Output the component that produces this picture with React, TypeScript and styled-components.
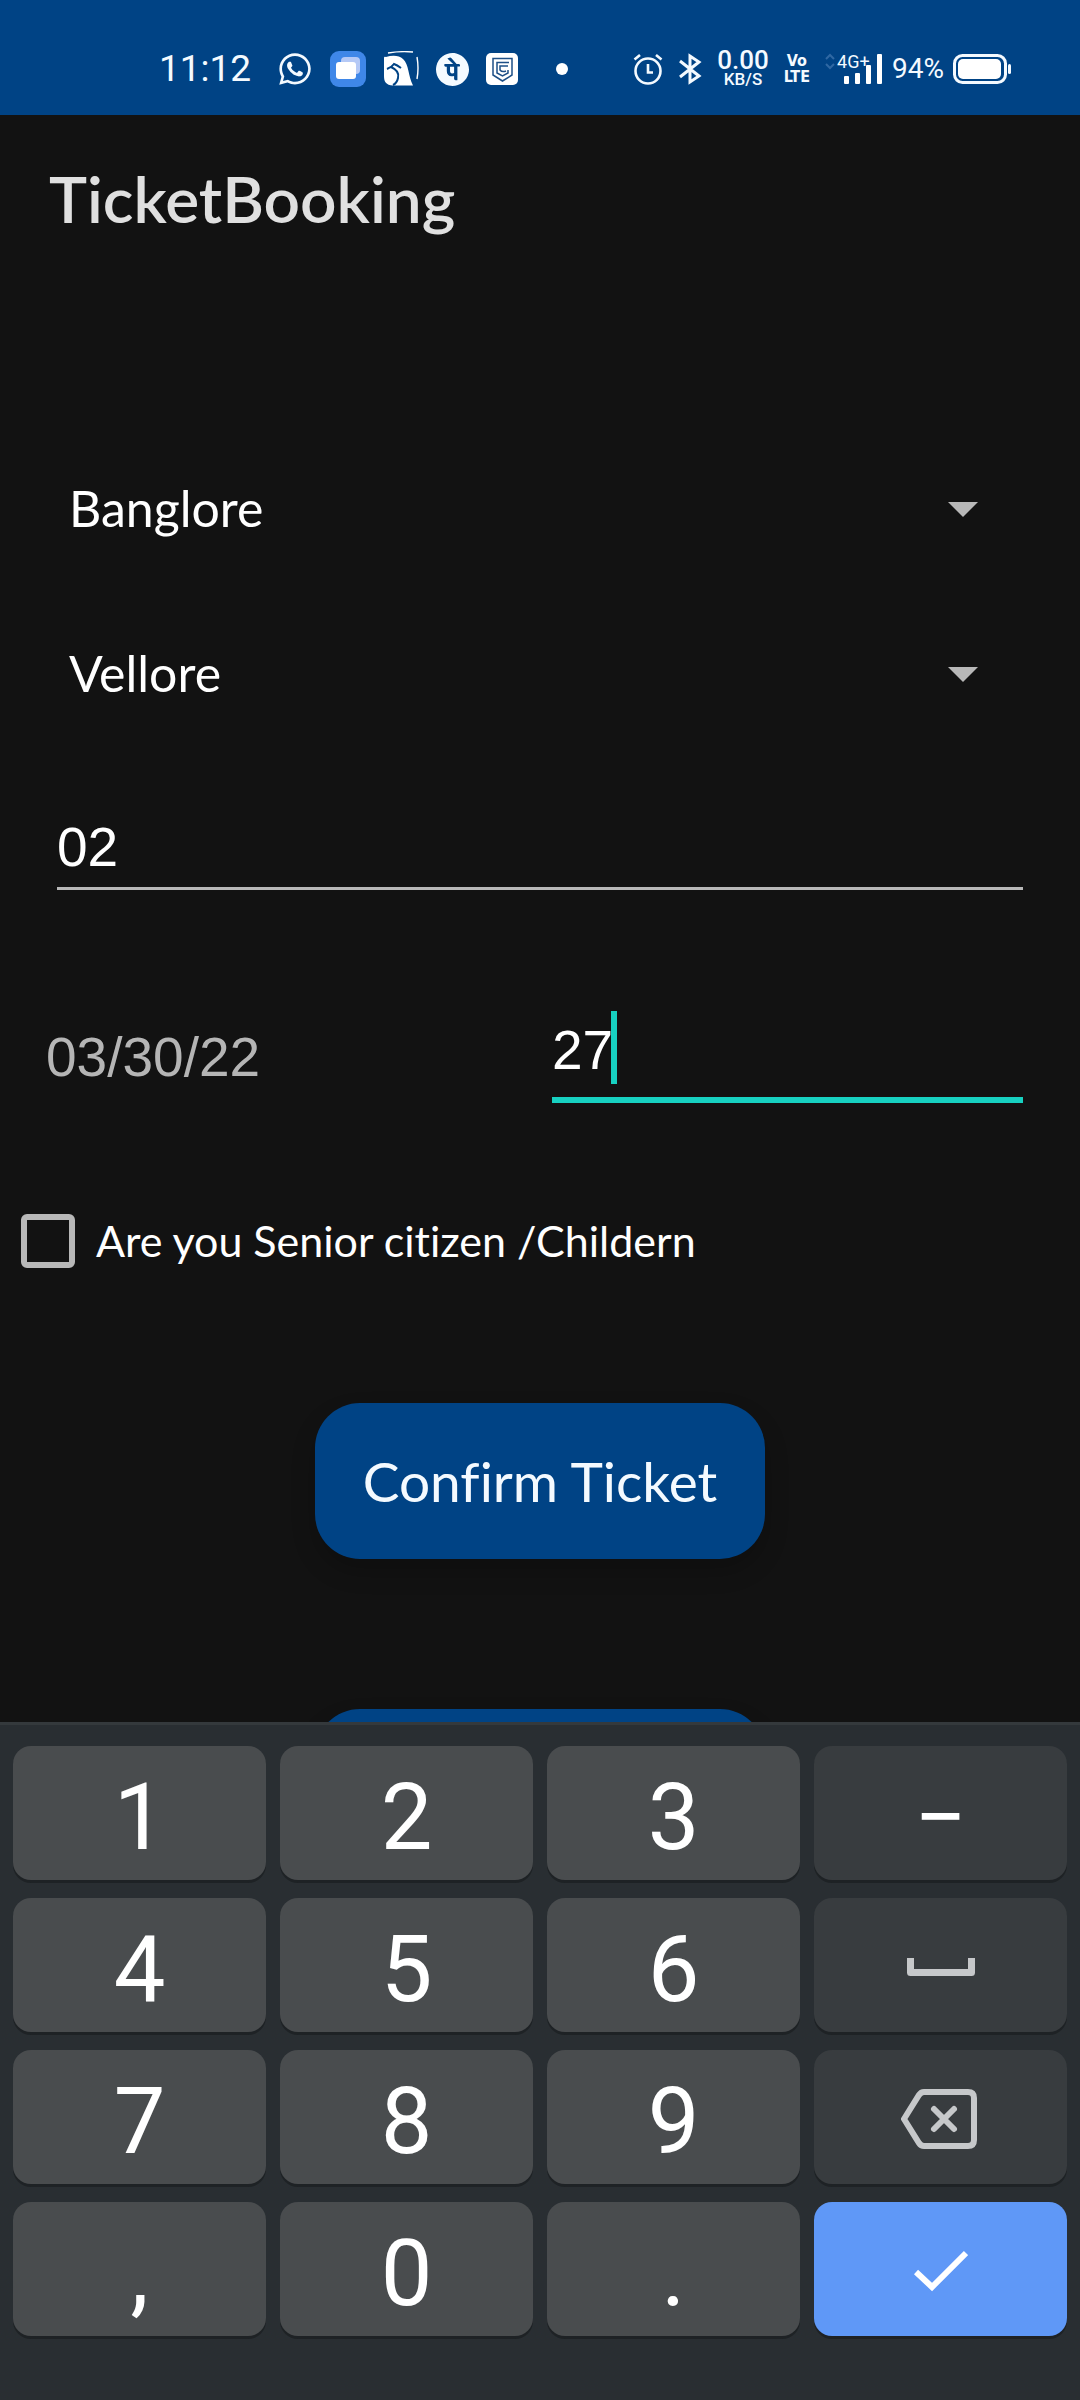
import React, { useState } from "react";
import styled, { createGlobalStyle } from "styled-components";
import { FaWhatsapp } from "react-icons/fa";
import { SiPhonepe } from "react-icons/si";

const digitFont = `Roboto, "Liberation Sans", sans-serif`;
const fieldFont = `"Liberation Sans", Roboto, sans-serif`;

const GlobalStyle = createGlobalStyle`
  * { box-sizing: border-box; }
  body {
    margin: 0;
    background: #121212;
    font-family: Lato, "Noto Sans", "Liberation Sans", sans-serif;
    font-variant-ligatures: none;
  }
  button, input, select { font-family: inherit; font-variant-ligatures: inherit; }
`;

const Screen = styled.div`
  display: flex;
  flex-direction: column;
  height: 100vh;
  overflow: hidden;
  background: #121212;
  color: #ffffff;
`;

/* ---------- status bar ---------- */

const StatusBar = styled.div`
  flex: none;
  display: flex;
  align-items: center;
  justify-content: space-between;
  height: 115px;
  padding: 23px 68px 0 159px;
  background: #004385;
  color: #f4faff;
`;

const StatusGroup = styled.div<{ $gap: number }>`
  display: flex;
  align-items: center;
  gap: ${(p) => p.$gap}px;
  svg { display: block; flex: none; }
`;

const Clock = styled.span`
  margin-right: 9px;
  font-family: ${digitFont};
  font-size: 37px;
  line-height: 40px;
`;

const Dot = styled.span`
  width: 12px;
  height: 12px;
  margin-left: 21px;
  border-radius: 50%;
  background: #ffffff;
`;

const StackedLabel = styled.span`
  display: flex;
  flex-direction: column;
  align-items: center;
  font-weight: 700;
`;

const Speed = styled.span`
  font-family: ${digitFont};
  font-weight: 500;
  font-size: 26px;
  line-height: 20px;
`;

const SpeedUnit = styled.span`
  font-family: ${digitFont};
  font-weight: 500;
  font-size: 17px;
  line-height: 18px;
`;

const NetLine = styled.span`
  font-family: "Liberation Sans Narrow", "DejaVu Sans Condensed", sans-serif;
  font-size: 16px;
  line-height: 16px;
`;

const Signal = styled.span`
  position: relative;
  display: block;
  width: 58px;
  height: 32px;
`;

const SignalType = styled.span`
  position: absolute;
  top: 0;
  left: 12px;
  font-family: ${digitFont};
  font-size: 18px;
  line-height: 18px;
`;

const Percent = styled.span`
  font-family: ${digitFont};
  font-size: 28px;
  line-height: 32px;
`;

/* ---------- app ---------- */

const AppBar = styled.header`
  flex: none;
  display: flex;
  align-items: center;
  height: 168px;
  padding: 0 49px;
`;

const Title = styled.h1`
  margin: 0;
  font-size: 64px;
  line-height: 72px;
  font-weight: 600;
  color: #e0e0e0;
`;

const Form = styled.form`
  flex: 1;
  min-height: 0;
  overflow: hidden;
  display: flex;
  flex-direction: column;
  padding-top: 190px;
`;

const Spinner = styled.div`
  flex: none;
  position: relative;
  margin: 0 57px 93px;
  color: #b8b8b8;
`;

const Select = styled.select`
  display: block;
  width: 100%;
  height: 72px;
  padding: 0 80px 2px 12px;
  border: 0;
  outline: 0;
  appearance: none;
  background: transparent;
  color: #ffffff;
  font-size: 50px;
  line-height: 60px;
`;

const Arrow = styled.svg`
  position: absolute;
  top: 29px;
  right: 45px;
  pointer-events: none;
`;

const Passengers = styled.input`
  flex: none;
  height: 87px;
  margin: 0 57px;
  padding: 4px 0 0;
  border: 0;
  border-bottom: 3px solid #b8b8b8;
  outline: 0;
  background: transparent;
  color: #ffffff;
  font-family: ${fieldFont};
  font-size: 55px;
  line-height: 66px;
`;

const DateRow = styled.div`
  flex: none;
  display: grid;
  grid-template-columns: 1fr 1fr;
  gap: 35px;
  align-items: center;
  margin-top: 121px;
  padding: 0 57px 0 46px;
`;

const TravelDate = styled.time`
  color: #b5b5b5;
  font-family: ${fieldFont};
  font-size: 55px;
  line-height: 66px;
`;

const FocusedField = styled.label`
  display: flex;
  align-items: center;
  padding-bottom: 13px;
  border-bottom: 6px solid #17d1c1;
`;

const AgeInput = styled.input`
  field-sizing: content;
  height: 73px;
  padding: 4px 0 0;
  border: 0;
  outline: 0;
  background: transparent;
  caret-color: transparent;
  color: #ffffff;
  font-family: ${fieldFont};
  font-size: 55px;
  line-height: 66px;
`;

const Caret = styled.span`
  width: 6px;
  height: 73px;
  margin-left: -2px;
  background: #17d1c1;
`;

const CheckRow = styled.label`
  flex: none;
  display: flex;
  align-items: center;
  gap: 21px;
  margin-top: 111px;
  padding: 0 21px;
  font-size: 43px;
  line-height: 54px;
`;

const CheckBox = styled.input`
  flex: none;
  width: 54px;
  height: 54px;
  margin: 0;
  border: 6px solid #b8b8b8;
  border-radius: 6px;
  appearance: none;
  &:checked { background: #17d1c1; }
`;

const Actions = styled.div`
  flex: none;
  display: flex;
  flex-direction: column;
  align-items: center;
  gap: 150px;
  margin-top: 135px;
`;

const ActionButton = styled.button`
  min-width: 450px;
  height: 156px;
  padding: 0 44px;
  border: 0;
  border-radius: 45px;
  background: #004385;
  box-shadow: 0 12px 24px rgba(0, 0, 0, 0.2);
  color: #f4faff;
  font-size: 55px;
  line-height: 66px;
`;

/* ---------- keypad ---------- */

const Keypad = styled.div`
  flex: none;
  display: grid;
  grid-template-columns: repeat(4, 1fr);
  gap: 18px 14px;
  padding: 21px 13px 64px;
  border-top: 3px solid #34393c;
  background: #292e32;
`;

const keyColors = {
  digit: "#494c4e",
  side: "#383c3f",
  enter: "#5f98f7",
};

const Key = styled.button<{ $tone: keyof typeof keyColors }>`
  display: flex;
  align-items: center;
  justify-content: center;
  height: 134px;
  padding: 4px 0 0;
  border: 0;
  border-radius: 18px;
  background: ${(p) => keyColors[p.$tone]};
  box-shadow: 0 3px 0 #1e2225;
  color: #ffffff;
  font-family: ${digitFont};
  font-size: 92px;
  line-height: 108px;
`;

const KeyText = styled.span`
  padding-top: 6px;
`;

const SpaceIcon = () => (
  <svg width="68" height="18" viewBox="0 0 68 18" fill="none" stroke="#c6c8ca" strokeWidth="7" strokeLinejoin="round">
    <path d="M3.5 0V14.5H64.5V0" />
  </svg>
);

const BackspaceIcon = () => (
  <svg width="80" height="60" viewBox="0 0 80 60" fill="none" stroke="#c6c8ca" strokeWidth="6">
    <path d="M23 3H67Q73 3 73 9V51Q73 57 67 57H23Q20 57 18 54L3 30L18 6Q20 3 23 3Z" />
    <path d="M33 20L53 40M53 20L33 40" strokeLinecap="round" />
  </svg>
);

const TickIcon = () => (
  <svg width="54" height="42" viewBox="0 0 54 42" fill="none" stroke="#ffffff" strokeWidth="6">
    <path d="M2 22L18 37L52 3" />
  </svg>
);

type KeyDef = { id: string; tone: keyof typeof keyColors; face: React.ReactNode };

const keys: KeyDef[] = [
  { id: "1", tone: "digit", face: "1" },
  { id: "2", tone: "digit", face: "2" },
  { id: "3", tone: "digit", face: "3" },
  { id: "minus", tone: "side", face: "−" },
  { id: "4", tone: "digit", face: "4" },
  { id: "5", tone: "digit", face: "5" },
  { id: "6", tone: "digit", face: "6" },
  { id: "space", tone: "side", face: <SpaceIcon /> },
  { id: "7", tone: "digit", face: "7" },
  { id: "8", tone: "digit", face: "8" },
  { id: "9", tone: "digit", face: "9" },
  { id: "backspace", tone: "side", face: <BackspaceIcon /> },
  { id: "comma", tone: "digit", face: "," },
  { id: "0", tone: "digit", face: "0" },
  { id: "period", tone: "digit", face: "." },
  { id: "done", tone: "enter", face: <TickIcon /> },
];

/* ---------- status icons ---------- */

const CardsIcon = () => (
  <svg width="36" height="36" viewBox="0 0 36 36">
    <rect width="36" height="36" rx="9" fill="#3f87e8" />
    <rect x="11" y="6" width="19" height="17" rx="4" fill="#b5c9f6" />
    <rect x="6" y="11" width="20" height="17" rx="3" fill="#ffffff" />
  </svg>
);

const BirdIcon = () => (
  <svg width="36" height="36" viewBox="0 0 36 36" fill="none">
    <path d="M5 2Q17 0 30 1" stroke="#ffffff" strokeWidth="1.4" />
    <path d="M34 6Q36 17 34 28" stroke="#ffffff" strokeWidth="1.4" />
    <path d="M1 7Q1 5 3 6C9 4 16 4 20 8C26 13 25 25 30 34.500H10C3 34 1 31 1 25Z" fill="#ffffff" />
    <path d="M4 18Q9 16 11 13Q14 14 18 17M8 16Q17 20 15 27Q14 32 10 34" stroke="#004385" strokeWidth="2" />
  </svg>
);

const ShieldIcon = () => (
  <svg width="32" height="32" viewBox="0 0 32 32" fill="none" stroke="#1d4f86" strokeWidth="1.500">
    <rect width="32" height="32" rx="5" fill="#ffffff" stroke="none" />
    <path d="M7 5.500H26V22L16.500 28L7 22Z" />
    <path d="M23 9.500H11V20L16.500 23L22 20V17" />
    <path d="M22 13H14V17Q16 19.500 20 18" />
  </svg>
);

const AlarmIcon = () => (
  <svg width="30" height="32" viewBox="0 0 30 32" fill="none" stroke="#f4faff" strokeWidth="2.600">
    <circle cx="15" cy="18" r="12.500" />
    <path d="M1.500 6.500L7 2M28.500 6.500L23 2M15 11V19.500H20" />
  </svg>
);

const BluetoothIcon = () => (
  <svg width="24" height="32" viewBox="0 0 24 32" fill="none" stroke="#f4faff" strokeWidth="3">
    <path d="M2 8L21 23L12 29V3L21 9L2 24" />
  </svg>
);

const BatteryIcon = () => (
  <svg width="59" height="30" viewBox="0 0 59 30" fill="none">
    <rect x="1.500" y="1.500" width="51" height="27" rx="8" stroke="#f4faff" strokeWidth="3" />
    <rect x="5" y="5" width="43" height="20" rx="5" fill="#ffffff" />
    <rect x="55" y="10" width="3" height="10" rx="1.500" fill="#f4faff" />
  </svg>
);

const SignalBars = () => (
  <svg width="58" height="32" viewBox="0 0 58 32">
    <path d="M1 6L5 2L9 6M1 11L5 15L9 11" fill="none" stroke="#2f68a3" strokeWidth="2" />
    <g fill="#ffffff">
      <rect x="19" y="23" width="5" height="8" rx="1" />
      <rect x="30" y="20" width="5" height="11" rx="1" />
      <rect x="41" y="12" width="5" height="19" rx="1" />
      <rect x="52" y="1" width="5" height="30" rx="1" />
    </g>
  </svg>
);

const CityPicker = ({ label, value }: { label: string; value: string }) => (
  <Spinner>
    <Select aria-label={label} defaultValue={value}>
      <option>Banglore</option>
      <option>Vellore</option>
    </Select>
    <Arrow width="30" height="15" viewBox="0 0 30 15">
      <path d="M0 0H30L15 15Z" fill="#b8b8b8" />
    </Arrow>
  </Spinner>
);

export default function App() {
  const [age, setAge] = useState("27");

  return (
    <>
      <GlobalStyle />
      <Screen>
        <StatusBar>
          <StatusGroup $gap={17}>
            <Clock>11:12</Clock>
            <FaWhatsapp size={36} />
            <CardsIcon />
            <BirdIcon />
            <SiPhonepe size={33} />
            <ShieldIcon />
            <Dot />
          </StatusGroup>
          <StatusGroup $gap={15}>
            <AlarmIcon />
            <BluetoothIcon />
            <StackedLabel>
              <Speed>0.00</Speed>
              <SpeedUnit>KB/S</SpeedUnit>
            </StackedLabel>
            <StackedLabel>
              <NetLine>Vo</NetLine>
              <NetLine>LTE</NetLine>
            </StackedLabel>
            <StatusGroup $gap={9}>
              <Signal>
                <SignalBars />
                <SignalType>4G+</SignalType>
              </Signal>
              <Percent>94%</Percent>
              <BatteryIcon />
            </StatusGroup>
          </StatusGroup>
        </StatusBar>

        <AppBar>
          <Title>TicketBooking</Title>
        </AppBar>

        <Form onSubmit={(e) => e.preventDefault()}>
          <CityPicker label="From" value="Banglore" />
          <CityPicker label="To" value="Vellore" />
          <Passengers aria-label="Passengers" inputMode="numeric" defaultValue="02" />
          <DateRow>
            <TravelDate dateTime="2022-03-30">03/30/22</TravelDate>
            <FocusedField>
              <AgeInput
                aria-label="Age"
                inputMode="numeric"
                value={age}
                onChange={(e) => setAge(e.target.value)}
              />
              <Caret />
            </FocusedField>
          </DateRow>
          <CheckRow>
            <CheckBox type="checkbox" />
            Are you Senior citizen /Childern
          </CheckRow>
          <Actions>
            <ActionButton type="submit">Confirm Ticket</ActionButton>
            <ActionButton type="button" aria-label="Next action" />
          </Actions>
        </Form>

        <Keypad>
          {keys.map((k) => (
            <Key key={k.id} type="button" $tone={k.tone} aria-label={k.id}>
              {typeof k.face === "string" ? <KeyText>{k.face}</KeyText> : k.face}
            </Key>
          ))}
        </Keypad>
      </Screen>
    </>
  );
}
